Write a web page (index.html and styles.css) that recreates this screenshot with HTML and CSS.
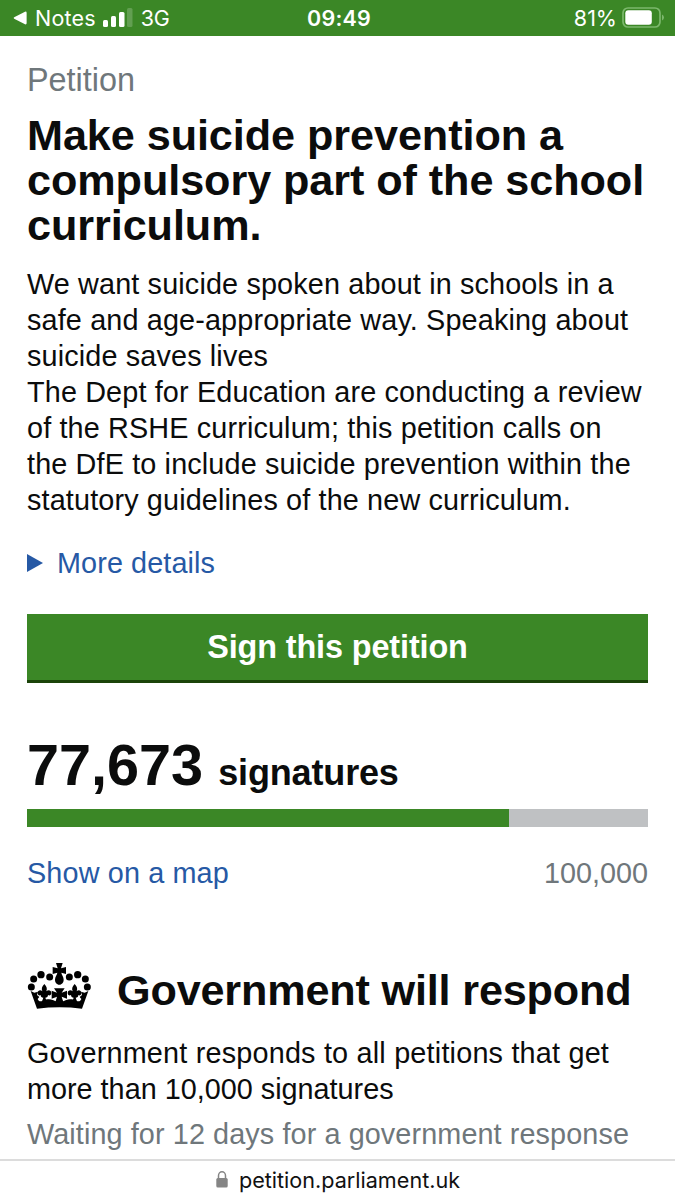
FILE: index.html
```
<!DOCTYPE html>
<html lang="en">
<head>
<meta charset="utf-8">
<title>Make suicide prevention a compulsory part of the school curriculum. - Petitions</title>
<link rel="stylesheet" href="styles.css">
</head>
<body>

<header class="status-bar">
  <div class="status-left">
    <svg class="back" width="14" height="14" viewBox="0 0 14 14"><path d="M1.2 6.2 12 .7q1.6-.5 1.6 1v10.6q0 1.500-1.600 1L1.200 7.800Q0 7 1.200 6.200z"/></svg>
    <span class="app">Notes</span>
    <svg class="signal" width="30" height="19" viewBox="0 0 30 19">
      <rect x="0" y="12" width="5" height="7" rx="1.500"/>
      <rect x="8" y="8" width="5" height="11" rx="1.500"/>
      <rect x="16" y="4" width="5.500" height="15" rx="1.500"/>
      <rect x="24" y="0" width="5.500" height="19" rx="1.500" opacity=".2"/>
    </svg>
    <span class="network">3G</span>
  </div>
  <div class="clock">09:49</div>
  <div class="status-right">
    <span class="percent">81%</span>
    <svg class="battery" width="43" height="22" viewBox="0 0 43 22">
      <rect x="1" y="1" width="37" height="19" rx="5" fill="none" stroke="#7cb86c" stroke-width="1.700"/>
      <rect x="3.300" y="3.300" width="26.500" height="14.400" rx="3"/>
      <path d="M40 7.500q2 1 2 3t-2 3z" fill="#7cb86c"/>
    </svg>
  </div>
</header>

<main class="content">
  <h1 class="page-title">
    <span class="context">Petition</span>
    <span class="title-text">Make suicide prevention a<br>compulsory part of the school<br>curriculum.</span>
  </h1>

  <p class="background">We want suicide spoken about in schools in a<br>safe and age-appropriate way. Speaking about<br>suicide saves lives<br>The Dept for Education are conducting a review<br>of the RSHE curriculum; this petition calls on<br>the DfE to include suicide prevention within the<br>statutory guidelines of the new curriculum.</p>

  <a class="more-details" href="#"><svg width="16" height="18" viewBox="0 0 16 18"><path d="M0 0l16 9-16 9z"/></svg><span>More details</span></a>

  <a class="button" href="#">Sign this petition</a>

  <p class="signature-count"><span class="count">77,673</span> <span class="count-label">signatures</span></p>
  <div class="progress"><div class="progress-current" style="width: 77.67%"></div></div>
  <div class="count-footer">
    <a class="map-link" href="#">Show on a map</a>
    <span class="goal">100,000</span>
  </div>

  <section class="threshold">
    <div class="threshold-heading">
      <svg class="crown" width="65" height="47" viewBox="36 36 195 141">
        <g>
          <circle cx="49" cy="111" r="10.500"/><circle cx="56" cy="87" r="10.500"/><circle cx="78" cy="74" r="11"/><circle cx="104" cy="81" r="10.500"/>
          <circle cx="217" cy="111" r="10.500"/><circle cx="211" cy="87" r="10.500"/><circle cx="188" cy="74" r="11"/><circle cx="163" cy="81" r="10.500"/>
        </g>
        <!-- top cross and drop -->
        <path d="M123 39h20l-5 16 15-4v21l-14-4c1 7 7 12 7 21 0 8-5 15-13 15s-13-7-13-15c0-9 6-14 7-21l-14 4V51l15 4z"/>
        <!-- centre cross -->
        <path d="M117 115h32l-9 13 16-6v24l-16-6 6 20h-26l6-20-16 6v-24l16 6z"/>
        <!-- fleurs-de-lis -->
        <path d="M88 102c8 8 9 14 6 22 6-6 15-3 15 5 0 7-6 9-10 6 0 6-4 8-8 8l6 17H79l6-17c-5 0-8-2-8-8-4 3-9 0-9-6 0-8 9-11 14-5-3-8-2-14 6-22z"/>
        <path d="M179 102c-8 8-9 14-6 22-6-6-15-3-15 5 0 7 6 9 10 6 0 6 4 8 8 8l-6 17h18l-6-17c5 0 8-2 8-8 4 3 9 0 9-6 0-8-9-11-14-5 3-8 2-14-6-22z"/>
        <!-- band -->
        <path d="M47 123l11 5 11-3-3 10 7 6-5 6c3 7 8 9 15 5 17-8 31-4 38 2 8-5 17-5 25 0 7-6 21-10 38-2 7 4 12 2 15-5l-5-6 7-6-3-10 11 3 11-5-19 53q-67-8-135 0z"/>
      </svg>
      <h2>Government will respond</h2>
    </div>
    <p class="threshold-text"><span class="first-line">Government responds to all petitions that get</span><br>more than 10,000 signatures</p>
    <p class="waiting">Waiting for 12 days for a government response</p>
  </section>
</main>

<footer class="address-bar">
  <svg width="12" height="17" viewBox="0 0 12 17"><path d="M2.500 8V4.800a3.500 4 0 0 1 7 0V8" fill="none" stroke="#858585" stroke-width="1.500"/><rect x=".3" y="7" width="11.400" height="9.600" rx="1.500" fill="#858585"/></svg>
  <span>petition.parliament.uk</span>
</footer>

</body>
</html>
```
FILE: styles.css
```
body {
  margin: 0;
  height: 1200px;
  display: flex;
  flex-direction: column;
  overflow: hidden;
  background: #fff;
  color: #0b0c0c;
  font-family: "Liberation Sans", Arial, sans-serif;
  font-size: 28.8px;
  line-height: 36px;
  white-space: nowrap;
}

h1, h2, p {
  margin: 0;
}

a {
  color: #2659a5;
  text-decoration: none;
}

svg {
  display: block;
  flex: none;
}

.status-bar {
  flex: none;
  height: 36px;
  box-sizing: border-box;
  padding: 0 10px 0 13px;
  display: grid;
  grid-template-columns: 1fr auto 1fr;
  align-items: center;
  background: #3b8726;
  color: #fff;
  fill: #fff;
  font-family: Inter, sans-serif;
  font-size: 21.5px;
}

.status-left, .status-right {
  display: flex;
  align-items: center;
}

.status-right {
  justify-content: flex-end;
}

.app {
  margin-left: 8px;
  letter-spacing: 0.2px;
}

.signal {
  margin: 0 8px 2px 7px;
}

.network {
  letter-spacing: -0.3px;
}

.clock {
  font-weight: 600;
  letter-spacing: 0.2px;
}

.battery {
  margin-left: 5px;
}

.content {
  flex: 1;
  min-height: 0;
  padding: 26px 27px 0;
}

.context {
  display: block;
  color: #6f777b;
  font-size: 32.4px;
  font-weight: normal;
  line-height: 36px;
}

.title-text {
  display: block;
  margin-top: 15px;
  font-size: 43.2px;
  line-height: 45px;
  letter-spacing: -0.07px;
}

.background {
  margin-top: 18px;
  letter-spacing: 0.14px;
}

.more-details {
  display: flex;
  align-items: center;
  gap: 14px;
  margin-top: 27px;
  letter-spacing: 0.1px;
  fill: #2659a5;
}

.button {
  display: block;
  box-sizing: border-box;
  height: 69px;
  margin-top: 33px;
  border-bottom: 3px solid #1b4409;
  background: #3b8726;
  color: #fff;
  font-size: 32.4px;
  font-weight: bold;
  line-height: 67px;
  letter-spacing: -0.12px;
  text-align: center;
}

.signature-count {
  margin-top: 50px;
  height: 76px;
  font-weight: bold;
  line-height: 64px;
}

.count {
  font-size: 57.6px;
}

.count-label {
  margin-left: 7px;
  font-size: 36px;
  letter-spacing: -0.15px;
}

.progress {
  height: 18px;
  background: #bfc1c3;
}

.progress-current {
  height: 18px;
  background: #3b8726;
}

.count-footer {
  display: flex;
  justify-content: space-between;
  margin-top: 28px;
}

.map-link {
  letter-spacing: 0.14px;
}

.goal {
  color: #6f777b;
}

.threshold {
  margin-top: 71px;
}

.threshold-heading {
  display: flex;
  gap: 25px;
}

.threshold-heading h2 {
  font-size: 43.2px;
  line-height: 56px;
  letter-spacing: -0.17px;
}

.threshold-text {
  margin-top: 17px;
}

.first-line {
  letter-spacing: 0.2px;
}

.waiting {
  margin-top: 9px;
  color: #6f777b;
  letter-spacing: 0.1px;
}

.address-bar {
  flex: none;
  height: 41px;
  box-sizing: border-box;
  border-top: 2px solid #dcdcdc;
  padding: 0 0 2px 1px;
  background: #fff;
  color: #111;
  display: flex;
  align-items: center;
  justify-content: center;
  gap: 11px;
  font-family: Inter, sans-serif;
  font-size: 21.6px;
}
```
